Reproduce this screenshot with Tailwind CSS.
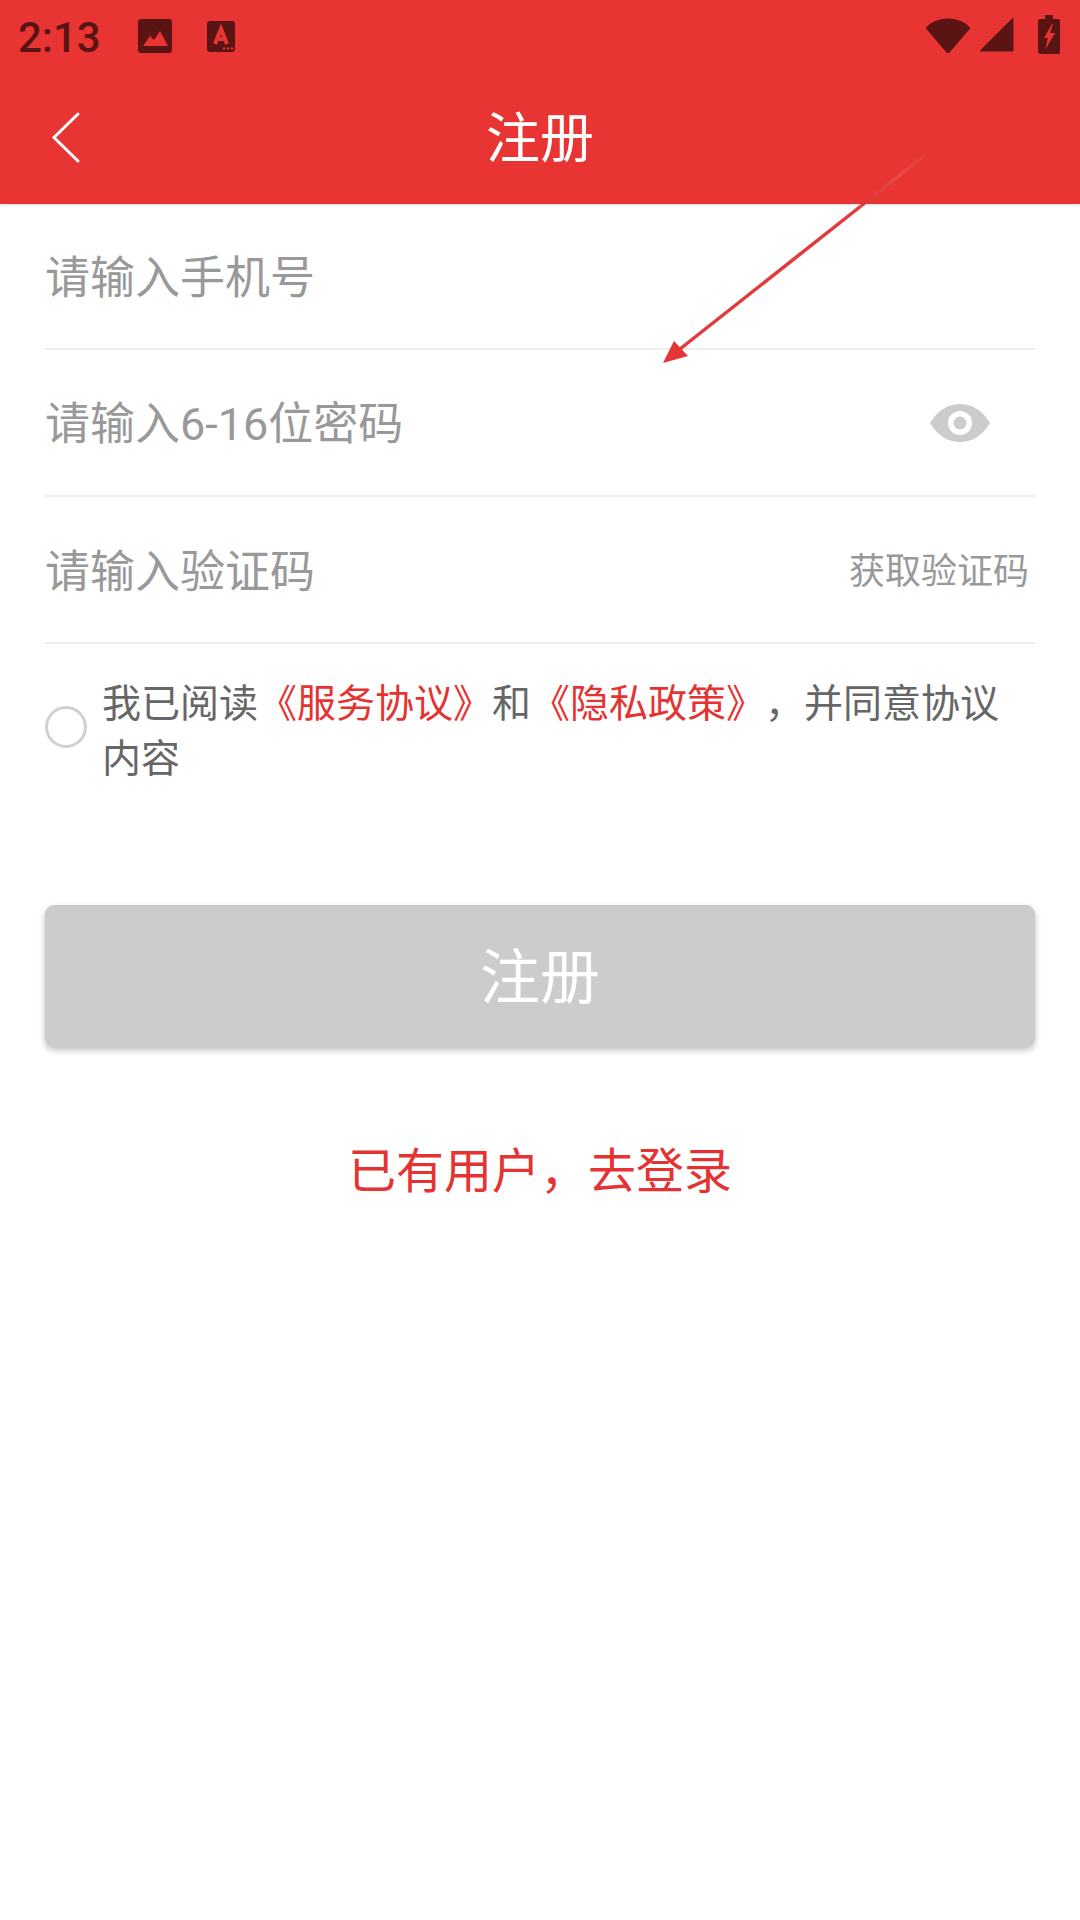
<!DOCTYPE html>
<html lang="zh"><head><meta charset="utf-8">
<script src="https://cdn.jsdelivr.net/npm/@tailwindcss/browser@4"></script></head>
<body class="m-0 bg-white">
<div class="relative w-[1080px] h-[1920px] overflow-hidden bg-white font-['Roboto','Noto_Sans_CJK_SC',sans-serif] [text-spacing-trim:space-all]">
  <header class="h-[204px] bg-[#e83432] shadow-[0_1px_3px_rgba(0,0,0,0.15)] flex flex-col">
    <div class="h-[72px] relative flex items-center text-[#5a1413]">
      <span class="ml-[18px] mt-[4px] font-['Roboto'] font-medium text-[42px] leading-none">2:13</span>
      <svg class="ml-[37px]" width="34" height="34" viewBox="0 0 34 34"><rect width="34" height="34" rx="3" fill="#5a1413"/><path d="M5 27 L12 17 L16 21 L22 12 L30 27Z" fill="#e83432"/></svg>
      <svg class="ml-[35px]" width="28" height="31" viewBox="0 0 28 31"><rect width="28" height="31" rx="3" fill="#5a1413"/><path d="M8 23 L14 8 L20 23 M10 18 H18" fill="none" stroke="#e83432" stroke-width="4"/><circle cx="17" cy="27.500" r="1.200" fill="#e83432"/><circle cx="21" cy="27.500" r="1.200" fill="#e83432"/><circle cx="25" cy="27.500" r="1.200" fill="#e83432"/></svg>
      <div class="ml-auto flex items-center mr-[20px] mb-[3px]">
        <svg width="46" height="36" viewBox="0 0 46 36"><path d="M1 11 C12 -1 34 -1 45 11 L24.500 35 C23.500 36 22.500 36 21.500 35Z" fill="#5a1413" stroke="#5a1413" stroke-linejoin="round"/></svg>
        <svg class="ml-[8px]" width="35" height="35" viewBox="0 0 35 35"><path d="M34 1 V34 H1Z" fill="#5a1413" stroke="#5a1413" stroke-linejoin="round"/></svg>
        <svg class="ml-[24px]" width="22" height="39" viewBox="0 0 22 39"><path d="M7 0 H15 V4 H20 Q22 4 22 6 V37 Q22 39 20 39 H2 Q0 39 0 37 V6 Q0 4 2 4 H7Z" fill="#5a1413"/><path d="M14 9 L6 23 H10 L7 35 L17 18 H12 L15 9Z" fill="#e83432"/></svg>
      </div>
    </div>
    <div class="h-[132px] relative flex items-center justify-center">
      <svg class="absolute left-[50px] top-[39px]" width="32" height="54" viewBox="0 0 32 54"><path d="M28 3 L4 26.500 L28 50" fill="none" stroke="#fff" stroke-width="3" stroke-linecap="round"/></svg>
      <h1 class="text-[54px] leading-none font-normal text-white mt-[4px]">注册</h1>
    </div>
  </header>

  <main class="px-[45px]">
    <div class="h-[146px] border-b-2 border-[#eeeeee] flex items-center text-[45px] text-[#999999]"><span class="mt-[6px]">请输入手机号</span></div>
    <div class="h-[147px] border-b-2 border-[#eeeeee] flex items-center justify-between text-[45px] text-[#999999]">
      <span class="mt-[5px]">请输入6-16位密码</span>
      <svg class="mr-[45px]" width="60" height="38" viewBox="0 0 60 38"><path d="M0 19 C8 6 18 0 30 0 C42 0 52 6 60 19 C52 32 42 38 30 38 C18 38 8 32 0 19Z" fill="#cccccc"/><circle cx="30" cy="19" r="12" fill="#fff"/><circle cx="30" cy="19" r="6.500" fill="#cccccc"/></svg>
    </div>
    <div class="h-[147px] border-b-2 border-[#eeeeee] flex items-center justify-between text-[45px] text-[#999999]">
      <span class="mt-[6px]">请输入验证码</span>
      <span class="text-[36px] mr-[6px] mt-[4px]">获取验证码</span>
    </div>
    <div class="flex items-center mt-[29px]">
      <span class="shrink-0 size-[42px] rounded-full border-[3px] border-[#d0d0d0] -translate-y-[1px]"></span>
      <p class="ml-[15px] w-[900px] text-[39px] leading-[55px] text-[#666666] translate-y-[4px]">我已阅读<span class="text-[#e53333]">《服务协议》</span>和<span class="text-[#e53333]">《隐私政策》</span>，并同意协议内容</p>
    </div>
    <button class="mt-[122px] w-full h-[142px] pt-[5px] rounded-[9px] bg-[#cccccc] shadow-[0_3px_6px_rgba(0,0,0,0.25)] text-[60px] text-white flex items-center justify-center">注册</button>
    <p class="mt-[101px] text-center text-[48px] leading-none text-[#e53333]">已有用户，去登录</p>
  </main>

  <svg class="absolute left-0 top-0 pointer-events-none" width="1080" height="400" viewBox="0 0 1080 400">
    <defs><linearGradient id="f" x1="925" y1="155" x2="860" y2="206" gradientUnits="userSpaceOnUse"><stop offset="0" stop-color="#e85552" stop-opacity="0.3"/><stop offset="0.4" stop-color="#e85552" stop-opacity="0.7"/><stop offset="1" stop-color="#d83234"/></linearGradient></defs>
    <path d="M925 155 L861 206" stroke="url(#f)" stroke-width="3" fill="none"/>
    <path d="M861 206 L680 349" stroke="#e23b3d" stroke-width="3.500" fill="none"/>
    <path d="M663 363 L674 341 L688 356Z" fill="#e63537"/>
  </svg>
</div>
</body></html>
